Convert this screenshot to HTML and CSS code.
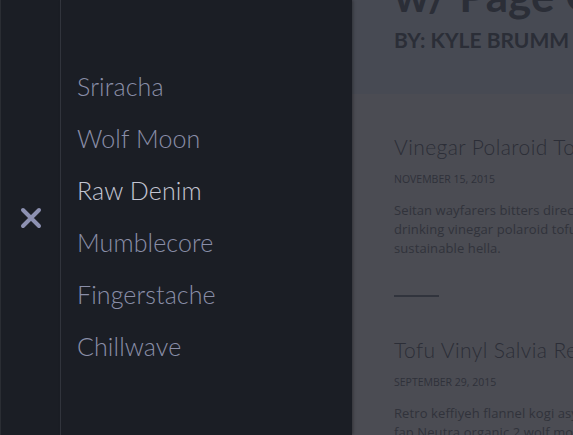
FILE: index.html
```html
<!DOCTYPE html>
<html lang="en">
<head>
<meta charset="utf-8">
<title>Push Menu w/ Page Overlay</title>
<link rel="stylesheet" href="styles.css">
</head>
<body>
  <aside class="rail">
    <button class="close" aria-label="Close menu">
      <svg width="22" height="22" viewBox="0 0 22 22" aria-hidden="true">
        <path d="M3 3 L19 19 M19 3 L3 19" stroke="#8d91b2" stroke-width="4" stroke-linecap="round" fill="none"/>
      </svg>
    </button>
  </aside>
  <nav class="menu">
    <ul class="menu-list">
      <li class="menu-item">Sriracha</li>
      <li class="menu-item">Wolf Moon</li>
      <li class="menu-item is-active">Raw Denim</li>
      <li class="menu-item">Mumblecore</li>
      <li class="menu-item">Fingerstache</li>
      <li class="menu-item">Chillwave</li>
    </ul>
  </nav>
  <main class="page">
    <header class="page-header">
      <h1 class="page-title">Push Menu<br>w/ Page Overlay</h1>
      <p class="byline">By: Kyle Brumm</p>
    </header>
    <section class="posts">
      <article class="post">
        <h2 class="post-title">Vinegar Polaroid Tofu Cred</h2>
        <p class="post-date">November 15, 2015</p>
        <p class="post-text">Seitan wayfarers bitters direct trade gluten-free, Pinterest<br>drinking vinegar polaroid tofu cred Marfa forage Schlitz<br>sustainable hella.</p>
      </article>
      <hr class="divider">
      <article class="post">
        <h2 class="post-title">Tofu Vinyl Salvia Retro Keffiyeh</h2>
        <p class="post-date">September 29, 2015</p>
        <p class="post-text">Retro keffiyeh flannel kogi asymmetrical, small batch<br>fap Neutra organic 2 wolf moon before they sold out.</p>
      </article>
    </section>
  </main>
</body>
</html>
```
FILE: styles.css
```css
* { box-sizing: border-box; }

body {
  margin: 0;
  height: 435px;
  overflow: hidden;
  display: flex;
  background: #1b1e25;
  font-family: Lato, "Liberation Sans", sans-serif;
}

.rail {
  width: 61px;
  flex: none;
  background: #1b1e25;
  border-left: 1px solid #2a2d33;
  border-right: 1px solid #353840;
  display: flex;
  align-items: center;
  justify-content: center;
}

.close {
  background: none;
  border: 0;
  padding: 0;
  width: 22px;
  height: 22px;
  display: block;
}
.close svg { display: block; }

.menu {
  width: 291px;
  flex: none;
  background: #1b1e25;
  padding-top: 60px;
  position: relative;
  z-index: 1;
  box-shadow: 1px 0 3px rgba(0, 0, 0, 0.35);
}

.menu-list {
  list-style: none;
  margin: 0;
  padding: 0 0 0 16px;
}

.menu-item {
  font-weight: 300;
  font-size: 25px;
  line-height: 52px;
  letter-spacing: 0.1px;
  color: #8a8ea8;
  white-space: nowrap;
}
.menu-item.is-active { color: #c3c5d2; }

.page {
  flex: 1;
  min-width: 0;
  overflow: hidden;
  background: #4b4c53;
  white-space: nowrap;
}

.page-header {
  display: flow-root;
  height: 94px;
  background: #474a53;
  padding-left: 42px;
}

.page-title {
  margin: -83px 0 0;
  font-size: 44px;
  line-height: 52px;
  font-weight: 700;
  color: #2b2e37;
}

.byline {
  margin: 6px 0 0;
  font-size: 21px;
  line-height: 26px;
  font-weight: 700;
  text-transform: uppercase;
  color: #2b2e37;
}

.posts {
  padding: 40px 0 0 42px;
}

.post-title {
  margin: 0;
  font-size: 21px;
  line-height: 26px;
  font-weight: 300;
  letter-spacing: 0.4px;
  color: #2c2e37;
}

.post-date {
  margin: 12px 0 0;
  font-family: "Open Sans", "Liberation Sans", sans-serif;
  font-size: 10.5px;
  line-height: 14px;
  text-transform: uppercase;
  color: #2f313a;
}

.post-text {
  margin: 15px 0 0;
  font-family: "Open Sans", "Liberation Sans", sans-serif;
  font-size: 13px;
  line-height: 19px;
  letter-spacing: 0.1px;
  color: #31333b;
}

.divider {
  width: 45px;
  height: 2px;
  margin: 37px 0 40px;
  border: 0;
  background: #31343d;
}
```
